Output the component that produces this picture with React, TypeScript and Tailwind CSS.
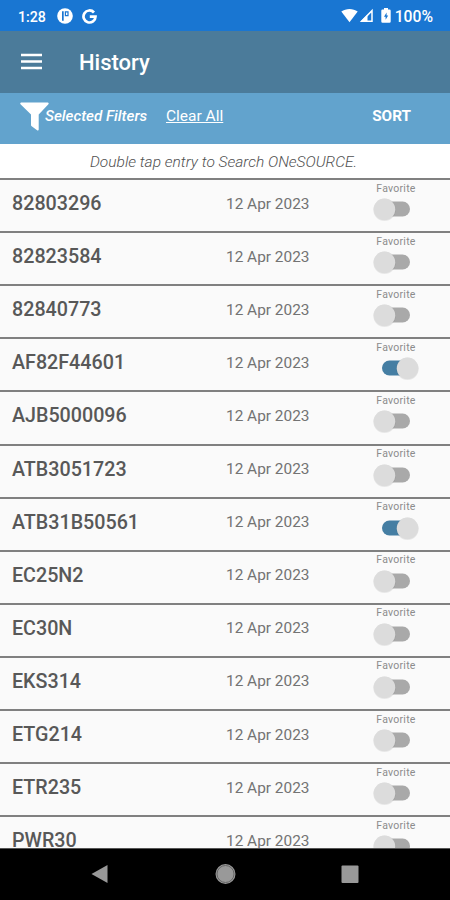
const ENTRIES = [
  { code: '82803296', date: '12 Apr 2023', favorite: false },
  { code: '82823584', date: '12 Apr 2023', favorite: false },
  { code: '82840773', date: '12 Apr 2023', favorite: false },
  { code: 'AF82F44601', date: '12 Apr 2023', favorite: true },
  { code: 'AJB5000096', date: '12 Apr 2023', favorite: false },
  { code: 'ATB3051723', date: '12 Apr 2023', favorite: false },
  { code: 'ATB31B50561', date: '12 Apr 2023', favorite: true },
  { code: 'EC25N2', date: '12 Apr 2023', favorite: false },
  { code: 'EC30N', date: '12 Apr 2023', favorite: false },
  { code: 'EKS314', date: '12 Apr 2023', favorite: false },
  { code: 'ETG214', date: '12 Apr 2023', favorite: false },
  { code: 'ETR235', date: '12 Apr 2023', favorite: false },
  { code: 'PWR30', date: '12 Apr 2023', favorite: false },
];

function StatusBar() {
  return (
    <div className="h-[31px] shrink-0 bg-[#1976d2] flex items-center pt-px pl-[18px] pr-[17px] text-white">
      <span className="text-[14.2px] font-medium leading-none pt-[2px] w-[39px]">1:28</span>
      <svg width="16" height="16" viewBox="0 0 16 16" className="mr-[9px]">
        <circle cx="8" cy="8" r="7.8" fill="#fff" />
        <path d="M5 3.200h1.700v9.600H5zM7.800 3.200h3.800v5H7.800z" fill="#1976d2" />
        <path d="M9 4.400h1.400v2.500H9z" fill="#fff" />
      </svg>
      <svg width="15" height="15" viewBox="0 0 15 15">
        <path d="M12 3.500A6 6 0 1 0 13.500 7.600H7.800" fill="none" stroke="#fff" strokeWidth="2.700" />
      </svg>
      <div className="ml-auto flex items-center">
        <svg width="17" height="15" viewBox="0 0 17 15">
          <path d="M.3 3.500C5 .1 12 .1 16.700 3.500L8.500 14.200z" fill="#fff" />
        </svg>
        <svg width="15" height="15" viewBox="0 0 15 15" className="ml-px">
          <path d="M13 2.600V13.200H2.600z" fill="none" stroke="#fff" strokeWidth="1.500" />
          <path d="M8.500 6.500V13.500H1.500z" fill="#fff" />
        </svg>
        <svg width="10" height="15" viewBox="0 0 10 15" className="ml-[7px] mr-[4px]">
          <path d="M3 0h4v1.500h1.500A1.200 1.200 0 0 1 9.700 2.700v10.800a1.200 1.200 0 0 1-1.200 1.200h-7A1.200 1.200 0 0 1 .3 13.500V2.700A1.200 1.200 0 0 1 1.500 1.500H3z" fill="#fff" />
          <path d="M5.600 4.500 3 8.800h1.600v3L7.200 7.500H5.600z" fill="#1976d2" />
        </svg>
        <span className="text-[15.7px] font-medium leading-none pt-[2px]">100%</span>
      </div>
    </div>
  );
}

function FavoriteSwitch({ on }: { on: boolean }) {
  return (
    <button role="switch" aria-checked={on} aria-label="Favorite" className="block">
      <svg width="48" height="26" viewBox="0 0 48 26">
        <rect x="10" y="5.500" width="28" height="15" rx="7.500" fill={on ? '#457ea3' : '#a9a9a9'} />
        <circle cx={on ? 35.500 : 12.500} cy="13.800" r="11.200" fill="#000" opacity="0.08" />
        <circle cx={on ? 35.500 : 12.500} cy="13.300" r="10.800" fill="#dcdcdc" />
      </svg>
    </button>
  );
}

export default function App() {
  return (
    <div className="w-[450px] h-[900px] flex flex-col overflow-hidden bg-[#fafafa] font-[Roboto,sans-serif]">
      <StatusBar />

      {/* App bar */}
      <header className="h-[62px] shrink-0 bg-[#4b7b9a] flex items-center pl-[21px] text-white">
        <button aria-label="Menu" className="w-[21px] mr-[37px] mt-[-2px]">
          <svg width="21" height="17" viewBox="0 0 21 17">
            <path d="M0 2h21M0 8.500h21M0 15h21" stroke="#fff" strokeWidth="2.500" />
          </svg>
        </button>
        <h1 className="text-[22px] font-medium leading-none pt-[2px]">History</h1>
      </header>

      {/* Filters */}
      <div className="h-[51px] shrink-0 bg-[#62a3cd] flex items-center pl-[20px] pr-[39px] text-white">
        <svg width="29" height="29" viewBox="0 0 29 29" className="mr-[-4px] mt-[-4px]">
          <path d="M1.300.5h26.400a1 1 0 0 1 .7 1.700L18.700 12.500V27.500a1 1 0 0 1-1.600.8l-5.400-4a1.500 1.500 0 0 1-.7-1.300V12.500L.5 2.200A1 1 0 0 1 1.300.5z" fill="#fff" />
        </svg>
        <span className="w-[102px] text-[15.2px] italic font-medium leading-none mt-[-3px] whitespace-nowrap">Selected Filters</span>
        <button className="text-[15.5px] leading-none underline ml-[19px] mt-[-3px]">Clear All</button>
        <button className="ml-auto text-[15.3px] font-bold leading-none mt-[-3px]">SORT</button>
      </div>

      <p className="h-[34px] shrink-0 bg-white pt-[3px] pl-[90px] flex items-center text-[15.5px] italic font-light text-[#505050] whitespace-nowrap">
        Double tap entry to Search ONeSOURCE.
      </p>

      {/* Entries */}
      <ul className="flex-1 min-h-0 overflow-hidden">
        {ENTRIES.map(entry => (
          <li key={entry.code} className="h-[53.12px] border-t-2 border-[#808080] flex pl-[12px] bg-[#fafafa]">
            <span className="w-[214px] pt-[13px] text-[19.7px] leading-[22px] font-medium text-[#585858]">{entry.code}</span>
            <span className="w-[146px] pt-[12.5px] text-[15.4px] leading-[22px] text-[#737373]">{entry.date}</span>
            <div className="w-[48px] flex flex-col items-center">
              <span className="text-[10.5px] tracking-[0.25px] leading-[12px] pt-[2.5px] pb-[1.5px] text-[#8c8c8c]">Favorite</span>
              <FavoriteSwitch on={entry.favorite} />
            </div>
          </li>
        ))}
      </ul>

      {/* System navigation */}
      <nav className="h-[52px] shrink-0 bg-black border-t border-[#555]">
        <svg width="450" height="51" viewBox="0 0 450 51">
          <path d="M91.500 25 107.500 16v18z" fill="#999" />
          <circle cx="225.500" cy="25" r="10" fill="#999" />
          <circle cx="225.500" cy="25" r="8.500" fill="none" stroke="#666" strokeWidth="1" />
          <rect x="341.500" y="16.500" width="17" height="17.500" rx="1" fill="#999" />
        </svg>
      </nav>
    </div>
  );
}
